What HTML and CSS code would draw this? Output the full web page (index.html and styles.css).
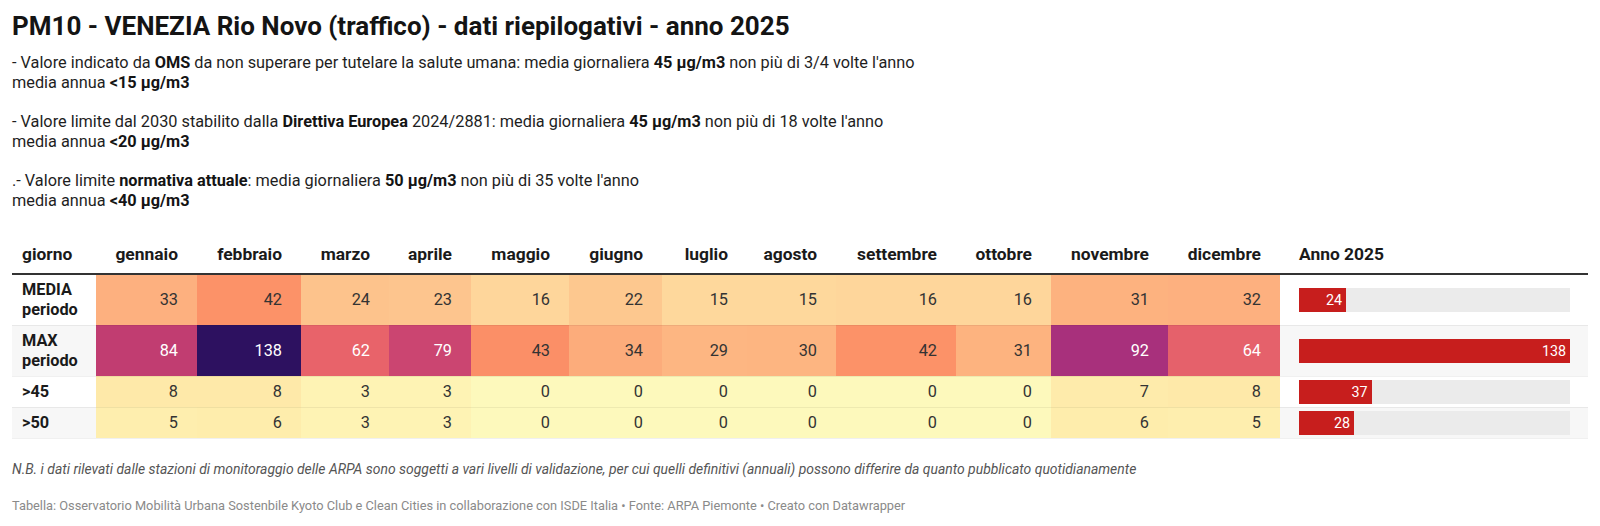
FILE: index.html
```html
<!DOCTYPE html>
<html lang="it">
<head>
<meta charset="utf-8">
<title>PM10 - VENEZIA Rio Novo</title>
<link rel="stylesheet" href="styles.css">
</head>
<body>
<div class="chart">
  <h1 class="title">PM10 - VENEZIA Rio Novo (traffico) - dati riepilogativi - anno 2025</h1>
  <div class="desc">
    <p>- Valore indicato da <b>OMS</b> da non superare per tutelare la salute umana: media giornaliera <b>45 µg/m3</b> non più di 3/4 volte l'anno<br>media annua <b>&lt;15 µg/m3</b></p>
    <p>- Valore limite dal 2030 stabilito dalla <b>Direttiva Europea</b> 2024/2881: media giornaliera <b>45 µg/m3</b> non più di 18 volte l'anno<br>media annua <b>&lt;20 µg/m3</b></p>
    <p>.- Valore limite <b>normativa attuale</b>: media giornaliera <b>50 µg/m3</b> non più di 35 volte l'anno<br>media annua <b>&lt;40 µg/m3</b></p>
  </div>
  <table class="tbl">
    <colgroup>
      <col style="width:84px"><col style="width:101px"><col style="width:104px"><col style="width:88px"><col style="width:82px"><col style="width:98px"><col style="width:93px"><col style="width:85px"><col style="width:89px"><col style="width:120px"><col style="width:95px"><col style="width:117px"><col style="width:112px"><col style="width:308px">
    </colgroup>
    <thead>
      <tr>
        <th class="lbl">giorno</th>
        <th>gennaio</th><th>febbraio</th><th>marzo</th><th>aprile</th><th>maggio</th><th>giugno</th><th>luglio</th><th>agosto</th><th>settembre</th><th>ottobre</th><th>novembre</th><th>dicembre</th>
        <th class="anno">Anno 2025</th>
      </tr>
    </thead>
    <tbody>
      <tr>
        <td class="lbl">MEDIA<br>periodo</td>
        <td style="background:#fdb07f">33</td>
        <td style="background:#fc9268">42</td>
        <td style="background:#fdc38c">24</td>
        <td style="background:#fdc58e">23</td>
        <td style="background:#fed69b">16</td>
        <td style="background:#fdc88f">22</td>
        <td style="background:#fed89c">15</td>
        <td style="background:#fed89c">15</td>
        <td style="background:#fed69b">16</td>
        <td style="background:#fed69b">16</td>
        <td style="background:#fdb27f">31</td>
        <td style="background:#fdb07f">32</td>
        <td class="barcell"><div class="track"><div class="bar" style="width:17.39%">24</div></div></td>
      </tr>
      <tr class="alt">
        <td class="lbl">MAX<br>periodo</td>
        <td class="inv" style="background:#c13d71">84</td>
        <td class="inv" style="background:#2d1160">138</td>
        <td class="inv" style="background:#e8636a">62</td>
        <td class="inv" style="background:#cb4571">79</td>
        <td style="background:#fb8f67">43</td>
        <td style="background:#fcac7b">34</td>
        <td style="background:#fdb682">29</td>
        <td style="background:#fdb581">30</td>
        <td style="background:#fc9268">42</td>
        <td style="background:#fdb37f">31</td>
        <td class="inv" style="background:#a8307c">92</td>
        <td class="inv" style="background:#e5616b">64</td>
        <td class="barcell"><div class="track"><div class="bar" style="width:100%">138</div></div></td>
      </tr>
      <tr>
        <td class="lbl">&gt;45</td>
        <td style="background:#fee9a9">8</td>
        <td style="background:#fee9a9">8</td>
        <td style="background:#fef3b4">3</td>
        <td style="background:#fef3b4">3</td>
        <td style="background:#fdf9bc">0</td>
        <td style="background:#fdf9bc">0</td>
        <td style="background:#fdf9bc">0</td>
        <td style="background:#fdf9bc">0</td>
        <td style="background:#fdf9bc">0</td>
        <td style="background:#fdf9bc">0</td>
        <td style="background:#feebab">7</td>
        <td style="background:#fee9a9">8</td>
        <td class="barcell"><div class="track"><div class="bar" style="width:26.81%">37</div></div></td>
      </tr>
      <tr class="alt">
        <td class="lbl">&gt;50</td>
        <td style="background:#feeeae">5</td>
        <td style="background:#feedac">6</td>
        <td style="background:#fef3b4">3</td>
        <td style="background:#fef3b4">3</td>
        <td style="background:#fdf9bc">0</td>
        <td style="background:#fdf9bc">0</td>
        <td style="background:#fdf9bc">0</td>
        <td style="background:#fdf9bc">0</td>
        <td style="background:#fdf9bc">0</td>
        <td style="background:#fdf9bc">0</td>
        <td style="background:#feedac">6</td>
        <td style="background:#feeeae">5</td>
        <td class="barcell"><div class="track"><div class="bar" style="width:20.29%">28</div></div></td>
      </tr>
    </tbody>
  </table>
  <p class="note">N.B. i dati rilevati dalle stazioni di monitoraggio delle ARPA sono soggetti a vari livelli di validazione, per cui quelli definitivi (annuali) possono differire da quanto pubblicato quotidianamente</p>
  <p class="source">Tabella: Osservatorio Mobilità Urbana Sostenbile Kyoto Club e Clean Cities in collaborazione con ISDE Italia • Fonte: ARPA Piemonte • Creato con Datawrapper</p>
</div>
</body>
</html>
```
FILE: styles.css
```css
html, body {
  margin: 0;
  padding: 0;
  background: #ffffff;
}
body {
  font-family: Roboto, "Liberation Sans", Arial, sans-serif;
  color: #1e1e1e;
}
.chart {
  padding: 10px 12px 0 12px;
}
.title {
  margin: 0;
  font-size: 26px;
  line-height: 32px;
  font-weight: 700;
  color: #141414;
}
.desc {
  margin-top: 11px;
  font-size: 16.3px;
  line-height: 19.7px;
  color: #1e1e1e;
}
.desc p {
  margin: 0 0 19.7px 0;
}
.desc p:last-child {
  margin-bottom: 0;
}
.desc b {
  font-weight: 700;
  color: #141414;
}
.tbl {
  margin-top: 22px;
  width: 1576px;
  table-layout: fixed;
  border-collapse: collapse;
  font-size: 16.3px;
  line-height: 20px;
}
.tbl th {
  font-size: 17.4px;
  font-weight: 700;
  color: #1a1a1a;
  text-align: right;
  padding: 11px 19px 9px 0;
  border-bottom: 2px solid #333333;
  white-space: nowrap;
}
.tbl th.lbl {
  text-align: left;
  padding-left: 10px;
}
.tbl th.anno {
  text-align: left;
  padding-left: 19px;
}
.tbl td {
  text-align: right;
  padding: 5px 19px 5px 0;
  color: #333333;
  border-bottom: 1px solid rgba(0, 0, 0, 0.06);
  white-space: nowrap;
}
.tbl td.inv {
  color: #ffffff;
}
.tbl td.lbl {
  text-align: left;
  padding-left: 10px;
  font-weight: 700;
  color: #1a1a1a;
}
.tbl tr.alt td.lbl,
.tbl tr.alt td.barcell {
  background: #f7f7f7;
}
.tbl td.barcell {
  padding: 0 18px 0 19px;
}
.track {
  height: 24px;
  background: #ebebeb;
}
.bar {
  height: 24px;
  background: #c71e1d;
  color: #ffffff;
  font-size: 14.3px;
  line-height: 24px;
  text-align: right;
  padding-right: 4px;
  box-sizing: border-box;
}
.note {
  margin: 21px 0 0 0;
  font-size: 13.93px;
  line-height: 18px;
  font-style: italic;
  color: #555555;
}
.source {
  margin: 20px 0 0 0;
  font-size: 12.8px;
  line-height: 16px;
  color: #8a8a8a;
}
```
